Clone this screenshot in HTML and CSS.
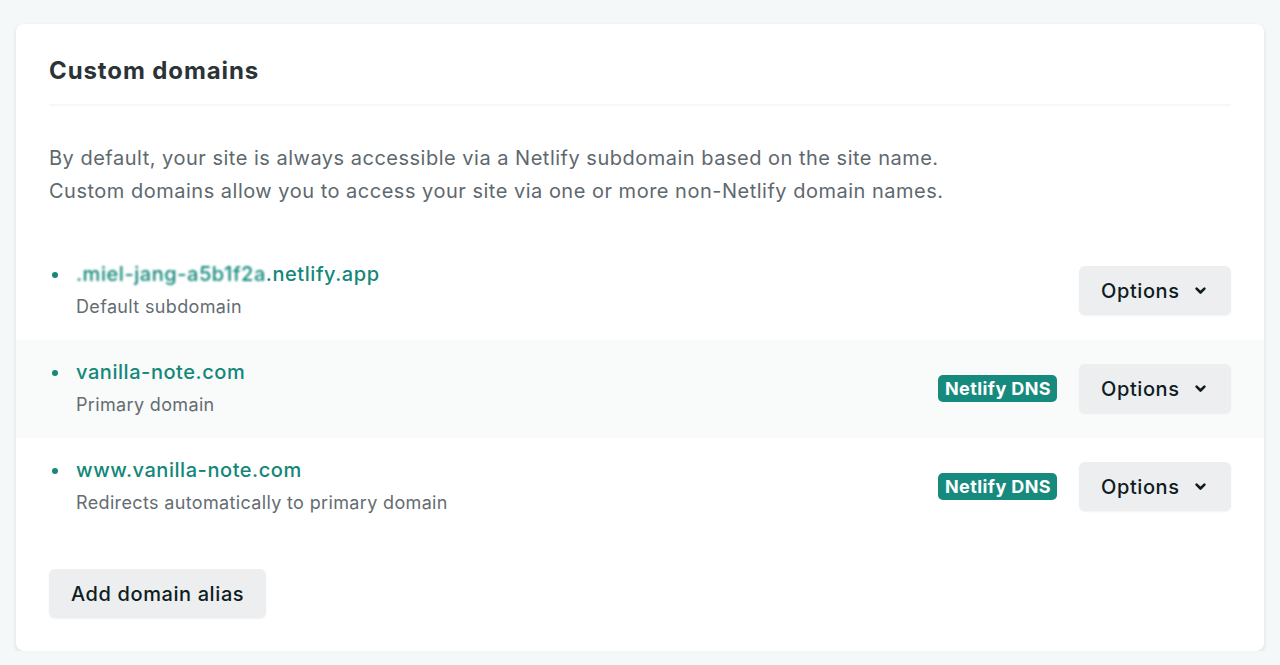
FILE: index.html
```html
<!DOCTYPE html>
<html lang="en">
<head>
<meta charset="utf-8">
<title>Custom domains</title>
<link rel="stylesheet" href="styles.css">
</head>
<body>
<section class="card">
  <header class="card-header">
    <h2 class="card-title">Custom domains</h2>
  </header>
  <p class="intro">By default, your site is always accessible via a Netlify subdomain based on the site name.<br>Custom domains allow you to access your site via one or more non-Netlify domain names.</p>
  <ul class="domains">
    <li class="domain">
      <div class="domain-info">
        <a class="domain-name" href="#"><span class="masked">.miel-jang-a5b1f2a</span>.netlify.app</a>
        <span class="domain-desc">Default subdomain</span>
      </div>
      <div class="domain-actions">
        <button class="btn">Options <svg class="chev" width="11" height="8" viewBox="0 0 11 8"><path d="M1.6 1.6l3.9 3.9 3.9-3.9" fill="none" stroke="currentColor" stroke-width="2.6" stroke-linecap="round" stroke-linejoin="round"/></svg></button>
      </div>
    </li>
    <li class="domain alt">
      <div class="domain-info">
        <a class="domain-name" href="#">vanilla-note.com</a>
        <span class="domain-desc">Primary domain</span>
      </div>
      <div class="domain-actions">
        <span class="badge">Netlify DNS</span>
        <button class="btn">Options <svg class="chev" width="11" height="8" viewBox="0 0 11 8"><path d="M1.6 1.6l3.9 3.9 3.9-3.9" fill="none" stroke="currentColor" stroke-width="2.6" stroke-linecap="round" stroke-linejoin="round"/></svg></button>
      </div>
    </li>
    <li class="domain">
      <div class="domain-info">
        <a class="domain-name" href="#">www.vanilla-note.com</a>
        <span class="domain-desc">Redirects automatically to primary domain</span>
      </div>
      <div class="domain-actions">
        <span class="badge">Netlify DNS</span>
        <button class="btn">Options <svg class="chev" width="11" height="8" viewBox="0 0 11 8"><path d="M1.6 1.6l3.9 3.9 3.9-3.9" fill="none" stroke="currentColor" stroke-width="2.6" stroke-linecap="round" stroke-linejoin="round"/></svg></button>
      </div>
    </li>
  </ul>
  <div class="card-footer">
    <button class="btn">Add domain alias</button>
  </div>
</section>
</body>
</html>
```

FILE: styles.css
```css
* { box-sizing: border-box; }
html, body { margin: 0; padding: 0; }
body {
  background: #f4f8f9;
  font-family: Inter, "Liberation Sans", sans-serif;
  padding: 24px 16px 0;
}
.card {
  background: #fff;
  border-radius: 8px;
  box-shadow: 0 2px 4px 0 rgba(14, 30, 37, 0.12);
  height: 627px;
  padding: 31px 0 33px;
  display: flex;
  flex-direction: column;
}
.card-header {
  margin: 0 33px;
  padding-bottom: 17px;
  border-bottom: 2px solid #f6f8f8;
}
.card-title {
  margin: 0;
  font-size: 24px;
  line-height: 32px;
  font-weight: 700;
  letter-spacing: 0.9px;
  color: #2c3337;
}
.intro {
  margin: 36px 33px 34px;
  font-size: 20px;
  line-height: 33px;
  letter-spacing: 0.5px;
  color: #5e686e;
}
.domains {
  list-style: none;
  margin: 0;
  padding: 0;
}
.domain {
  display: flex;
  align-items: center;
  justify-content: space-between;
  padding: 16px 33px 17px;
}
.domain.alt { background: #f9fafa; }
.domain-info {
  position: relative;
  display: flex;
  flex-direction: column;
  padding-left: 27px;
}
.domain-info::before {
  content: "";
  position: absolute;
  left: 3px;
  top: 14px;
  width: 6px;
  height: 6px;
  border-radius: 50%;
  background: #15897c;
}
.domain-name {
  font-size: 20px;
  line-height: 32px;
  letter-spacing: 0.55px;
  color: #12877a;
  text-decoration: none;
  font-weight: 500;
}
.masked {
  filter: blur(1.1px);
  letter-spacing: 0.55px;
}
.domain-desc {
  font-size: 18px;
  line-height: 33px;
  letter-spacing: 0.35px;
  color: #646d72;
}
.domain-actions {
  display: flex;
  align-items: center;
  gap: 22px;
}
.badge {
  display: inline-block;
  background: #158a7d;
  color: #fff;
  font-size: 18px;
  font-weight: 700;
  line-height: 27px;
  letter-spacing: 0.4px;
  padding: 0 6px 0 7px;
  border-radius: 5px;
}
.btn {
  display: inline-flex;
  align-items: center;
  gap: 15px;
  height: 49px;
  padding: 0 22px;
  border: 0;
  border-radius: 6px;
  background: #eceef0;
  color: #0f1c22;
  font-family: inherit;
  font-size: 20px;
  font-weight: 500;
  letter-spacing: 0.6px;
  box-shadow: 0 1px 2px rgba(14, 30, 37, 0.06);
}
.domain .btn { width: 152px; }
.chev { color: #0f1c22; }
.card-footer {
  margin-top: auto;
  padding: 0 33px;
}
```
